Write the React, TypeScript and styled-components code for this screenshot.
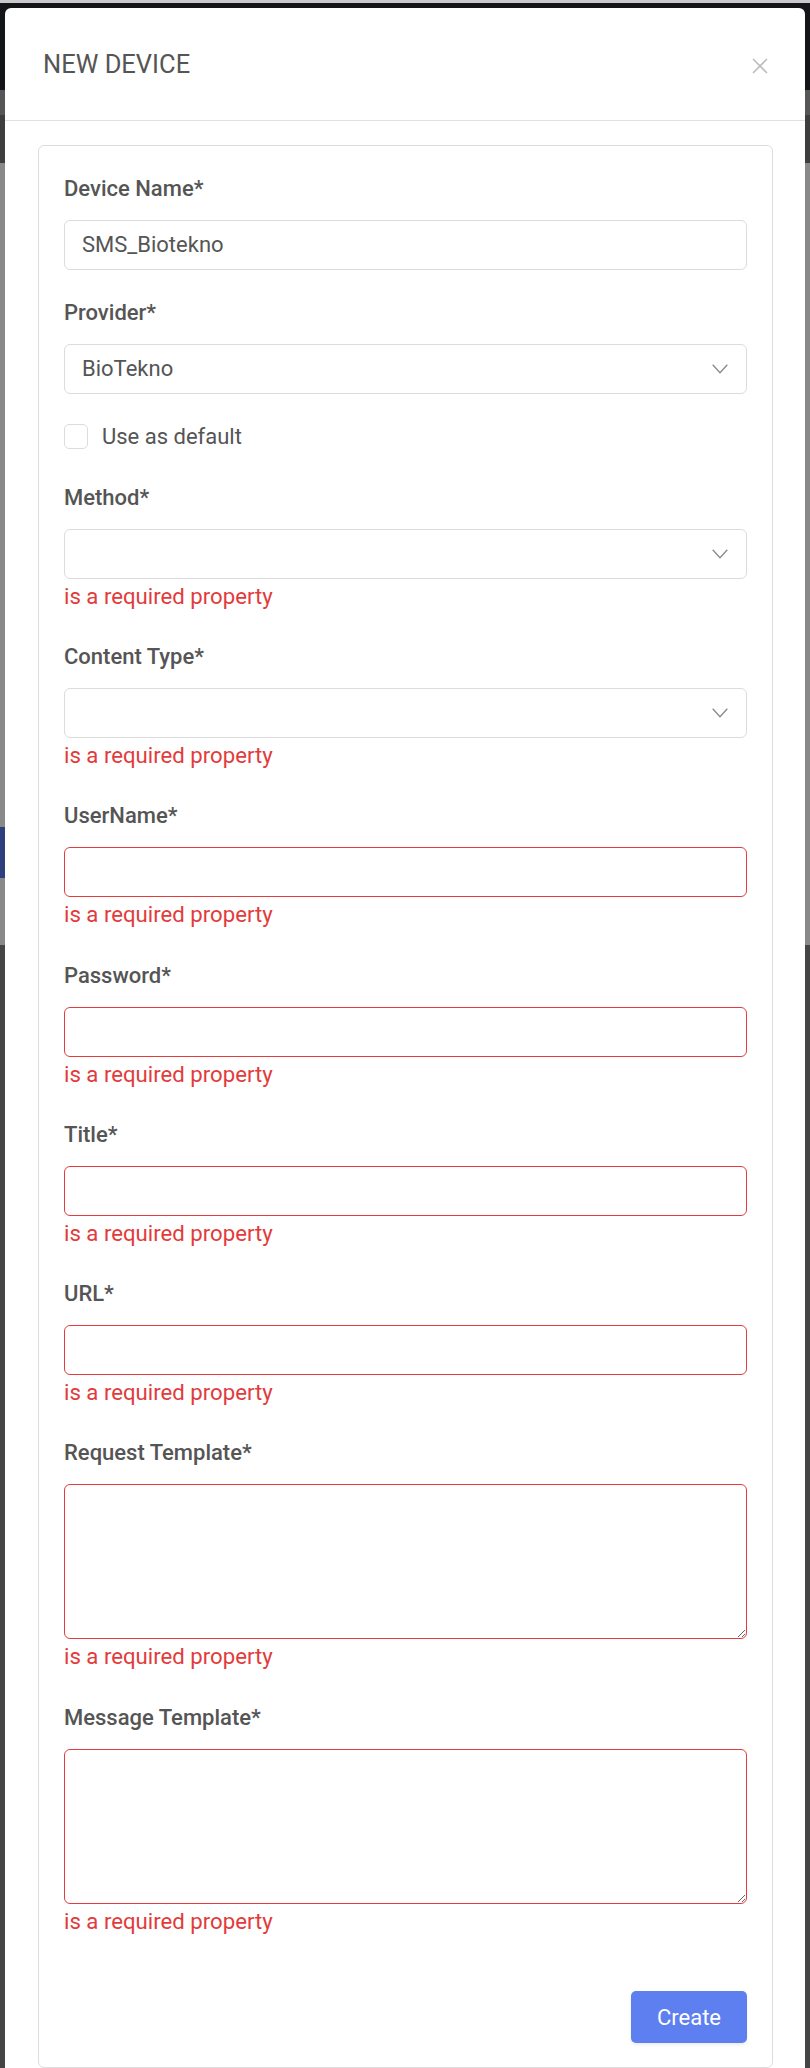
import React from "react";
import styled, { createGlobalStyle } from "styled-components";

const GlobalStyle = createGlobalStyle`
  html, body {
    margin: 0;
    padding: 0;
    height: 2068px;
    overflow: hidden;
  }
  body {
    font-family: Roboto, "Liberation Sans", Arial, sans-serif;
    background:
      linear-gradient(#2f3f7e, #2f3f7e) 0 827px / 5px 51px no-repeat,
      linear-gradient(
        to bottom,
        #c9c9c9 0px,
        #c9c9c9 3px,
        #141518 3px,
        #141518 90px,
        #565656 90px,
        #565656 115px,
        #3e3e3e 115px,
        #3e3e3e 163px,
        #898989 163px,
        #898989 945px,
        #454545 945px
      );
  }
  * { box-sizing: border-box; }
`;

const Modal = styled.div`
  margin: 8px 5px 0;
  background: #ffffff;
  border-radius: 6px 6px 0 0;
  min-height: 2080px;
`;

const Header = styled.div`
  height: 113px;
  padding: 0 37px 0 38px;
  display: flex;
  align-items: center;
  justify-content: space-between;
  border-bottom: 1px solid #e0e0e0;
`;

const Title = styled.h2`
  margin: 0;
  font-size: 25.5px;
  font-weight: 400;
  line-height: 31px;
  color: #555555;
`;

const CloseButton = styled.button`
  width: 16px;
  height: 16px;
  padding: 0;
  border: 0;
  background: transparent;
  display: flex;
  cursor: pointer;
  margin-top: 3px;
`;

const Body = styled.div`
  padding: 24px 32px 0 33px;
`;

const Card = styled.form`
  border: 1px solid #dddddd;
  border-radius: 6px;
  padding: 29.7px 25px 24px 25px;
`;

const Field = styled.div`
  margin-bottom: 30px;
`;

const Label = styled.label`
  display: block;
  font-size: 22px;
  font-weight: 500;
  line-height: 26px;
  color: #555555;
  margin-bottom: 18px;
`;

const TextInput = styled.input<{ $invalid?: boolean }>`
  display: block;
  width: 100%;
  height: 50px;
  padding: 0 17px;
  border: 1px solid ${(p) => (p.$invalid ? "#e23d3d" : "#dcdcdc")};
  border-radius: 6px;
  font-family: inherit;
  font-size: 22px;
  color: #555555;
  background: #ffffff;
  outline: none;
`;

const TextArea = styled.textarea<{ $invalid?: boolean }>`
  display: block;
  width: 100%;
  height: 155px;
  padding: 12px 17px;
  border: 1px solid ${(p) => (p.$invalid ? "#e23d3d" : "#dcdcdc")};
  border-radius: 6px;
  font-family: inherit;
  font-size: 22px;
  color: #555555;
  background: #ffffff;
  outline: none;
  resize: vertical;
`;

const SelectWrap = styled.div`
  position: relative;
`;

const Select = styled.select`
  display: block;
  width: 100%;
  height: 50px;
  padding: 0 50px 0 17px;
  border: 1px solid #dcdcdc;
  border-radius: 6px;
  font-family: inherit;
  font-size: 22px;
  color: #555555;
  background: #ffffff;
  appearance: none;
  -webkit-appearance: none;
  outline: none;
`;

const Chevron = styled.svg`
  position: absolute;
  right: 19px;
  top: 50%;
  margin-top: -5px;
  pointer-events: none;
`;

const ErrorText = styled.div`
  font-size: 22.2px;
  line-height: 26px;
  color: #e23b3b;
  padding-top: 4px;
  padding-bottom: 5.3px;
`;

const CheckRow = styled.label`
  display: flex;
  align-items: center;
  gap: 14px;
  height: 25px;
  margin-bottom: 36px;
  font-size: 22px;
  color: #555555;
  cursor: pointer;
`;

const CheckBox = styled.span`
  width: 24px;
  height: 25px;
  border: 1px solid #dcdcdc;
  border-radius: 5px;
  background: #ffffff;
  flex: none;
`;

const Footer = styled.div`
  display: flex;
  justify-content: flex-end;
  padding-top: 22px;
`;

const PrimaryButton = styled.button`
  width: 116px;
  height: 52px;
  border: 0;
  border-radius: 5px;
  background: #5d7ff0;
  color: #ffffff;
  font-family: inherit;
  font-size: 22px;
  box-shadow: 0 2px 3px rgba(0, 0, 0, 0.08);
  cursor: pointer;
`;

const ChevronIcon = () => (
  <Chevron width="16" height="10" viewBox="0 0 16 10" fill="none">
    <path d="M0.7 0.7 L8 8.8 L15.3 0.7" stroke="#8a8a8a" strokeWidth="1.3" />
  </Chevron>
);

type InputFieldProps = { label: string; value?: string; error?: string };

const InputField = ({ label, value, error }: InputFieldProps) => (
  <Field>
    <Label>{label}</Label>
    <TextInput $invalid={!!error} defaultValue={value} />
    {error && <ErrorText>{error}</ErrorText>}
  </Field>
);

const SelectField = ({ label, value, error }: InputFieldProps) => (
  <Field>
    <Label>{label}</Label>
    <SelectWrap>
      <Select defaultValue={value ?? ""}>
        <option value="">{""}</option>
        {value && <option value={value}>{value}</option>}
      </Select>
      <ChevronIcon />
    </SelectWrap>
    {error && <ErrorText>{error}</ErrorText>}
  </Field>
);

const AreaField = ({ label, error }: InputFieldProps) => (
  <Field>
    <Label>{label}</Label>
    <TextArea $invalid={!!error} />
    {error && <ErrorText>{error}</ErrorText>}
  </Field>
);

const REQ = "is a required property";

export default function App() {
  return (
    <>
      <GlobalStyle />
      <Modal>
        <Header>
          <Title>NEW DEVICE</Title>
          <CloseButton type="button" aria-label="close">
            <svg width="16" height="16" viewBox="0 0 16 16">
              <path d="M1 1 L15 15 M15 1 L1 15" stroke="#bdbdbd" strokeWidth="1.6" />
            </svg>
          </CloseButton>
        </Header>
        <Body>
          <Card onSubmit={(e) => e.preventDefault()}>
            <InputField label="Device Name*" value="SMS_Biotekno" />
            <SelectField label="Provider*" value="BioTekno" />
            <CheckRow>
              <CheckBox />
              Use as default
            </CheckRow>
            <SelectField label="Method*" error={REQ} />
            <SelectField label="Content Type*" error={REQ} />
            <InputField label="UserName*" error={REQ} />
            <InputField label="Password*" error={REQ} />
            <InputField label="Title*" error={REQ} />
            <InputField label="URL*" error={REQ} />
            <AreaField label="Request Template*" error={REQ} />
            <AreaField label="Message Template*" error={REQ} />
            <Footer>
              <PrimaryButton type="submit">Create</PrimaryButton>
            </Footer>
          </Card>
        </Body>
      </Modal>
    </>
  );
}
